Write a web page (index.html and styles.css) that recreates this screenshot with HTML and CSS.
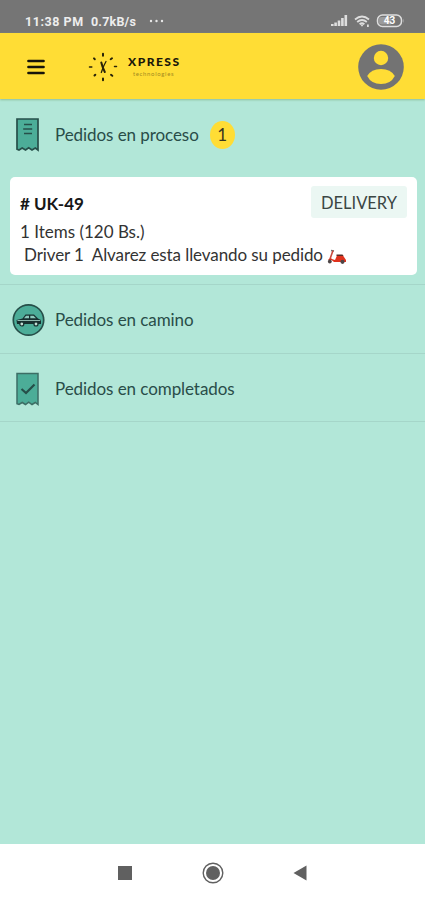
FILE: index.html
```html
<!DOCTYPE html>
<html lang="es">
<head>
<meta charset="utf-8">
<meta name="viewport" content="width=device-width">
<title>Pedidos</title>
<link rel="stylesheet" href="styles.css">
</head>
<body>
<div class="status">
  <span class="time">11:38 PM</span><span class="rate">0.7kB/s</span>
  <svg class="dots" width="18" height="4" viewBox="0 0 18 4" fill="#e8e8e8"><circle cx="3" cy="2" r="1.200"/><circle cx="8.500" cy="2" r="1.200"/><circle cx="14" cy="2" r="1.200"/></svg>
  <svg class="signals" width="76" height="16" viewBox="0 0 76 16">
    <g fill="#dedede"><path d="M0 11h2.600v2H0zM3.300 9.500h2.600V13H3.300zM6.700 7.500h2.600V13H6.700zM10.100 5h2.600v8h-2.600zM13.500 2h2.600v11h-2.600z"/></g>
    <g fill="none" stroke="#dedede" stroke-width="1.800"><path d="M24 6.500q7-6 14 0M26.200 9q4.800-4 9.600 0M28.600 11.200q2.400-2 4.800 0"/></g>
    <path d="M29.300 11.500h3.400L31 13.800zM36 11.500h1.800v2.500H36z" fill="#dedede"/>
    <rect x="46.500" y="2" width="24" height="11.500" rx="5" fill="none" stroke="#dedede" stroke-width="1.500"/>
    <path d="M51 4h9v7.500h-9a3.700 3.700 0 0 1 0-7.500zM72 5.500q2 2.300 0 4.500z" fill="#9b9b9b"/>
    <text x="58.500" y="11.300" text-anchor="middle" class="battery">43</text>
  </svg>
</div>
<header class="header">
  <svg class="menu" width="18" height="16" viewBox="0 0 18 16" stroke="#16140b" stroke-width="2.700" stroke-linecap="round"><path d="M1.500 2h15M1.500 8h15M1.500 14h15"/></svg>
  <svg class="sun" width="30" height="30" viewBox="0 0 30 30" fill="none" stroke="#282309" stroke-linecap="round">
    <path stroke-width="2" d="M15 1.800v2M15 26.500v1.800M6 6.400l.8.800M24 6.300l-1.300.9M6.500 23.500l.8-.8M23 22.800l1.300 1"/>
    <path stroke-width="1.500" d="M1.500 15h2.300M26.500 14.500h2"/>
    <path stroke-width="2" d="M13.300 10.500q1 4.500 3.500 9.500"/><path stroke-width="1.300" d="M18 9.500q-2.500 4-4.700 11"/>
  </svg>
  <div class="brand"><span class="name">XPRESS</span><span class="sub">technologies</span></div>
  <svg class="avatar" width="46" height="46" viewBox="0 0 46 46"><circle cx="23" cy="23" r="22.800" fill="#737373"/><circle cx="23" cy="14" r="7.200" fill="#ffdd35"/><path d="M9.200 32q4-7 13.800-7t13.800 7q-4 8-13.800 8T9.200 32z" fill="#ffdd35"/></svg>
</header>
<main class="main">
  <section class="group first">
    <div class="row">
      <svg class="icon" width="34" height="34" viewBox="0 0 34 34"><path d="M5 1h21v31l-2.700-2-3.300 2-3.300-2.300L13.500 32l-3.300-2L7 32l-2-.8z" fill="#4cad98" stroke="#264f49" stroke-width="1.700"/><path d="M12 6.500h8M11.200 11h9M12 15.500h8" stroke="#264f49" stroke-width="1.600"/></svg>
      <span class="label l1">Pedidos en proceso</span><span class="badge">1</span>
    </div>
    <article class="card">
      <div class="top"><strong class="order">#&nbsp;UK-49</strong><span class="tag">DELIVERY</span></div>
      <div class="items">1 Items (120 Bs.)</div>
      <div class="driver"><span>Driver 1&nbsp; Alvarez esta llevando su pedido</span>
        <svg class="scooter" width="20" height="16" viewBox="0 0 20 16"><path d="M4 1.500l3 .5" stroke="#687878" stroke-width="1.500"/><path d="M6 1.500L3 10" stroke="#c94a3e" stroke-width="1.600" fill="none"/><path d="M1 11q2-3 4.500-.8l2.500.8 2-4.500h6l3 4.500v2H7l-2.500-2z" fill="#df321d"/><path d="M9.500 5.500h6l1 1.500h-7z" fill="#5c2b25"/><circle cx="2.800" cy="12.500" r="1.900" fill="#4d4546"/><circle cx="15.500" cy="12.800" r="2.100" fill="#4d4546"/></svg>
      </div>
    </article>
  </section>
  <section class="group">
    <div class="row">
      <svg class="icon" width="34" height="34" viewBox="0 0 34 34"><circle cx="16.500" cy="17" r="15.200" fill="#4cad98" stroke="#264f49" stroke-width="1.700"/><path d="M4.500 17l6-1.500 3-4h8.500l4 4 3 1.500v4H5z" fill="#17302f"/><path d="M12 15.300l2-2.600h3v2.600zM18.300 12.700h3.200l2.500 2.600h-5.700z" fill="#8bc9bb"/><path d="M5.500 17.500h22.800" stroke="#9dcabe" stroke-width=".9"/><g fill="#c2ded4" stroke="#17302f" stroke-width="1.200"><circle cx="9.800" cy="21" r="2"/><circle cx="24" cy="21" r="2"/></g></svg>
      <span class="label l2">Pedidos en camino</span>
    </div>
  </section>
  <section class="group">
    <div class="row">
      <svg class="icon" width="34" height="34" viewBox="0 0 34 34"><path d="M5 1.500h21v31l-2.700-2-3.300 2-3.300-2.300-3.200 2.300-3.300-2-3.200 2-2-.8z" fill="#4cad98" stroke="#3d6e65" stroke-width="1.500"/><path d="M9.500 17l4.500 4 8.500-8.500" fill="none" stroke="#264f49" stroke-width="2.200"/></svg>
      <span class="label l3">Pedidos en completados</span>
    </div>
  </section>
</main>
<nav class="nav">
  <svg width="14" height="14" viewBox="0 0 14 14"><path d="M0 0h14v14H0z" fill="#606060"/></svg>
  <svg width="22" height="22" viewBox="0 0 22 22"><circle cx="11" cy="11" r="9.800" fill="none" stroke="#606060" stroke-width="1.400"/><circle cx="11" cy="11" r="7" fill="#606060"/></svg>
  <svg width="14" height="16" viewBox="0 0 14 16"><path d="M13.500.5v15L.5 8z" fill="#606060"/></svg>
</nav>
</body>
</html>
```
FILE: styles.css
```css
* { box-sizing: border-box; }
body { margin: 0; height: 900px; display: flex; flex-direction: column; font-family: Lato, sans-serif; color: #222; background: #b2e7d8; overflow: hidden; }
svg { display: block; flex: none; }
.status { height: 33px; flex: none; background: #757575; color: #ededed; display: flex; align-items: center; padding: 9px 18px 0 25px; font: bold 12.500px Roboto, sans-serif; white-space: nowrap; }
.time { width: 66px; letter-spacing: .55px; }
.rate { width: 57px; letter-spacing: .2px; }
.signals { margin-left: auto; }
.battery { font: bold 10px Roboto, sans-serif; fill: #fff; }
.header { height: 66px; flex: none; background: #ffdd35; display: flex; align-items: center; padding: 1px 21px 0 27px; box-shadow: 0 1px 2px #8cbf9c; }
.sun { margin-left: 43px; }
.brand { margin: 0 auto 0 10px; display: flex; flex-direction: column; }
.name { font-weight: 900; font-size: 12px; line-height: 13px; letter-spacing: 1.500px; color: #1b180a; }
.sub { margin: 2px 0 0 5px; font-size: 6px; line-height: 8px; letter-spacing: .65px; color: #a48a20; }
.main { flex: 1; }
.group { height: 68.500px; border-bottom: 1px solid #a5d6c9; }
.first { height: 186px; }
.row { height: 68px; display: flex; align-items: center; padding: 2px 0 0 12px; }
.first .row { padding-top: 3px; }
.label { margin-left: 9px; font-size: 17px; line-height: 22px; letter-spacing: -.07px; color: #294d49; white-space: nowrap; }
.badge { width: 25px; height: 28px; margin-left: 11px; border-radius: 50%; background: #ffdd35; display: flex; align-items: center; justify-content: center; font-size: 17px; color: #39351f; }
.card { margin: 10px 8px 0 10px; height: 98px; border-radius: 5px; background: #fff; padding: 9px 10px 0; font-size: 17px; line-height: 23px; white-space: nowrap; color: #333; }
.top { height: 34px; display: flex; justify-content: space-between; }
.order { font-size: 17px; line-height: 35px; color: #171717; }
.tag { width: 96px; height: 32px; line-height: 35px; font-size: 16.500px; text-align: center; background: #ebf7f3; border-radius: 3px; color: #3b4644; }
.driver { display: flex; align-items: center; padding-left: 4px; letter-spacing: -.09px; }
.scooter { margin: 4px 0 0 4px; }
.nav { height: 56px; flex: none; background: #fff; display: flex; align-items: center; justify-content: space-between; padding: 1px 118px 0 118px; }
```
